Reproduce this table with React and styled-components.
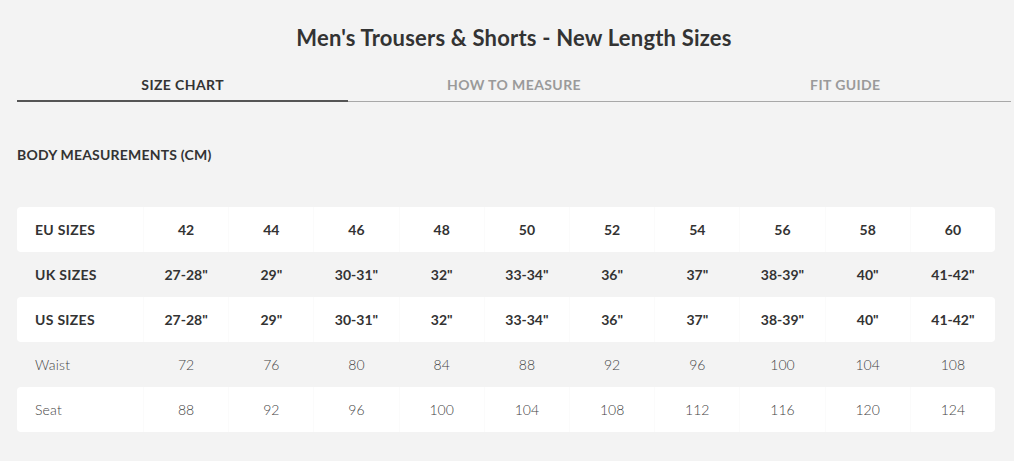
import React from 'react';
import styled, { createGlobalStyle } from 'styled-components';

const GlobalStyle = createGlobalStyle`
    html, body {
        margin: 0;
        padding: 0;
        background: #f3f3f3;
    }
    body {
        font-family: Lato, 'Open Sans', sans-serif;
        color: #333;
    }
`;

const Page = styled.div`
    padding: 0 3px 0 17px;
    width: 994px;
`;

const Title = styled.h1`
    margin: 0;
    padding-top: 25px;
    height: 26px;
    line-height: 26px;
    text-align: center;
    font-size: 22px;
    font-weight: 700;
    color: #333;
    letter-spacing: 0.2px;
`;

const Tabs = styled.div`
    display: grid;
    grid-template-columns: repeat(3, 1fr);
    margin-top: 19px;
`;

const Tab = styled.div`
    text-align: center;
    font-size: 14px;
    font-weight: 700;
    letter-spacing: 0.4px;
    height: 32px;
    line-height: 29px;
    box-sizing: border-box;
    color: ${({ active }) => (active ? '#333' : '#9a9a9a')};
    border-bottom: ${({ active }) => (active ? '2px solid #555' : '1px solid #a8a8a8')};
    align-self: end;
    padding-bottom: ${({ active }) => (active ? '0' : '1px')};
`;

const Heading = styled.h2`
    margin: 44px 0 0;
    font-size: 14px;
    font-weight: 700;
    letter-spacing: 0.2px;
    line-height: 18px;
    color: #333;
`;

const Table = styled.div`
    margin-top: 43px;
    width: 978px;
`;

const Row = styled.div`
    display: grid;
    grid-template-columns: 126px repeat(10, 1fr);
    height: 45px;
    align-items: stretch;
    background: ${({ striped }) => (striped ? '#fff' : 'transparent')};
    border-radius: 4px;
`;

const Label = styled.div`
    display: flex;
    align-items: center;
    padding-left: 18px;
    font-size: 14px;
    font-weight: ${({ bold }) => (bold ? 700 : 300)};
    color: ${({ bold }) => (bold ? '#333' : '#444')};
    letter-spacing: ${({ bold }) => (bold ? '0.3px' : '0.2px')};
`;

const Cell = styled.div`
    display: flex;
    align-items: center;
    justify-content: center;
    font-size: 14px;
    font-weight: ${({ bold }) => (bold ? 700 : 300)};
    color: ${({ bold }) => (bold ? '#333' : '#444')};
    border-left: 1px solid ${({ striped }) => (striped ? '#fbfbfb' : 'transparent')};
`;

const rows = [
    { label: 'EU SIZES', bold: true, values: ['42', '44', '46', '48', '50', '52', '54', '56', '58', '60'] },
    { label: 'UK SIZES', bold: true, values: ['27-28"', '29"', '30-31"', '32"', '33-34"', '36"', '37"', '38-39"', '40"', '41-42"'] },
    { label: 'US SIZES', bold: true, values: ['27-28"', '29"', '30-31"', '32"', '33-34"', '36"', '37"', '38-39"', '40"', '41-42"'] },
    { label: 'Waist', bold: false, values: ['72', '76', '80', '84', '88', '92', '96', '100', '104', '108'] },
    { label: 'Seat', bold: false, values: ['88', '92', '96', '100', '104', '108', '112', '116', '120', '124'] },
];

const tabs = ['SIZE CHART', 'HOW TO MEASURE', 'FIT GUIDE'];

const App = () => (
    <>
        <GlobalStyle />
        <Page>
            <Title>Men's Trousers &amp; Shorts - New Length Sizes</Title>
            <Tabs>
                {tabs.map((tab, index) => (
                    <Tab key={tab} active={index === 0}>
                        {tab}
                    </Tab>
                ))}
            </Tabs>
            <Heading>BODY MEASUREMENTS (CM)</Heading>
            <Table>
                {rows.map((row, index) => {
                    const striped = index % 2 === 0;
                    return (
                        <Row key={row.label} striped={striped}>
                            <Label bold={row.bold}>{row.label}</Label>
                            {row.values.map((value, i) => (
                                <Cell key={i} bold={row.bold} striped={striped}>
                                    {value}
                                </Cell>
                            ))}
                        </Row>
                    );
                })}
            </Table>
        </Page>
    </>
);

export default App;
